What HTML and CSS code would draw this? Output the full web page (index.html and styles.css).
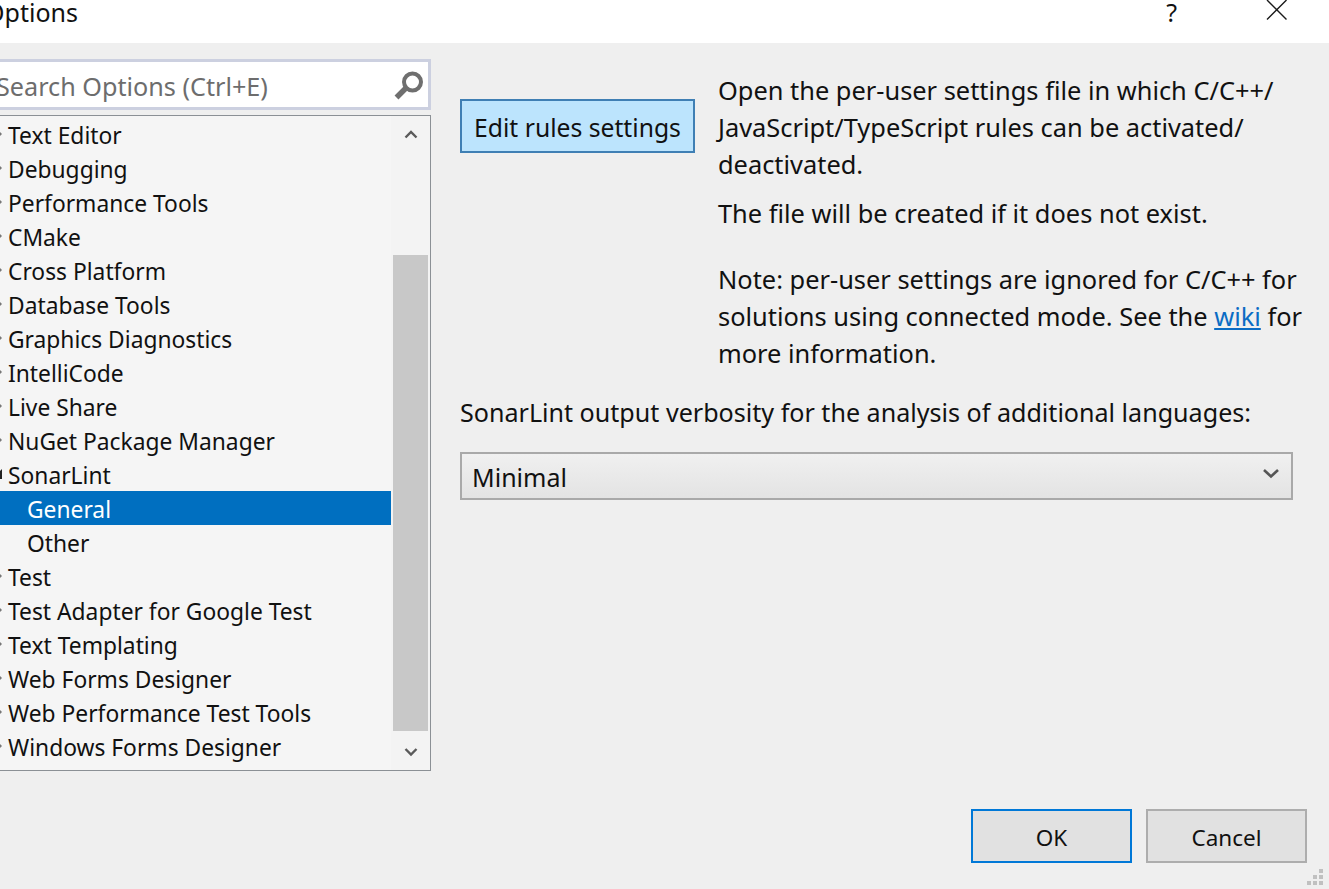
FILE: index.html
```html
<!DOCTYPE html>
<html>
<head>
  <title>Options</title>
  <link rel="stylesheet" href="styles.css">
</head>
<body>
  <div class="titlebar">
    <div class="window-title">Options</div>
    <div class="window-help">?</div>
    <svg class="window-close" width="22" height="22" viewBox="0 0 22 22">
      <path d="M1 0L20.5 19.5M20.5 0L1 19.5" stroke="#1a1a1a" stroke-width="1.4" fill="none"/>
    </svg>
  </div>

  <div class="content">
    <div class="sidebar">
      <div class="search">
        <span class="search-text">Search Options (Ctrl+E)</span>
        <svg class="search-icon" width="30" height="30" viewBox="0 0 30 30">
          <circle cx="18.5" cy="12" r="8.5" fill="none" stroke="#6f6f6f" stroke-width="4"/>
          <path d="M12 18L2.5 27.5" stroke="#6f6f6f" stroke-width="5.5" fill="none"/>
        </svg>
      </div>

      <div class="tree">
        <div class="tree-list">
          <div class="row"><i class="arrow"></i>Text Editor</div>
          <div class="row"><i class="arrow"></i>Debugging</div>
          <div class="row"><i class="arrow"></i>Performance Tools</div>
          <div class="row"><i class="arrow"></i>CMake</div>
          <div class="row"><i class="arrow"></i>Cross Platform</div>
          <div class="row"><i class="arrow"></i>Database Tools</div>
          <div class="row"><i class="arrow"></i>Graphics Diagnostics</div>
          <div class="row"><i class="arrow"></i>IntelliCode</div>
          <div class="row"><i class="arrow"></i>Live Share</div>
          <div class="row"><i class="arrow"></i>NuGet Package Manager</div>
          <div class="row"><i class="arrow open"></i>SonarLint</div>
          <div class="row child selected">General</div>
          <div class="row child">Other</div>
          <div class="row"><i class="arrow"></i>Test</div>
          <div class="row"><i class="arrow"></i>Test Adapter for Google Test</div>
          <div class="row"><i class="arrow"></i>Text Templating</div>
          <div class="row"><i class="arrow"></i>Web Forms Designer</div>
          <div class="row"><i class="arrow"></i>Web Performance Test Tools</div>
          <div class="row"><i class="arrow"></i>Windows Forms Designer</div>
        </div>
        <div class="scrollbar">
          <svg class="scroll-btn" width="38" height="34" viewBox="0 0 38 34">
            <path d="M14.5 21.5L20 16L25.5 21.5" stroke="#5a5a5a" stroke-width="2.4" fill="none"/>
          </svg>
          <div class="scroll-track"><div class="scroll-thumb"></div></div>
          <svg class="scroll-btn" width="38" height="34" viewBox="0 0 38 34">
            <path d="M14.5 13L20 18.5L25.5 13" stroke="#5a5a5a" stroke-width="2.4" fill="none"/>
          </svg>
        </div>
      </div>
    </div>

    <div class="main">
      <div class="rules">
        <button class="edit-btn"><span class="btn-label">Edit rules settings</span></button>
        <div class="rules-text">
          <p class="para">Open the per-user settings file in which C/C++/<br>JavaScript/TypeScript rules can be activated/<br>deactivated.</p>
          <p class="para para-second">The file will be created if it does not exist.</p>
          <p class="para para-note">Note: per-user settings are ignored for C/C++ for<br>solutions using connected mode. See the <a class="wiki" href="#">wiki</a> for<br>more information.</p>
        </div>
      </div>
      <div class="verbosity-label">SonarLint output verbosity for the analysis of additional languages:</div>
      <div class="select">
        <span class="select-value">Minimal</span>
        <svg class="select-arrow" width="16" height="12" viewBox="0 0 16 12">
          <path d="M1 2L8 8.5L15 2" stroke="#555" stroke-width="2.6" fill="none"/>
        </svg>
      </div>
    </div>
  </div>

  <div class="footer">
    <button class="dlg-btn default"><span class="btn-label">OK</span></button>
    <button class="dlg-btn"><span class="btn-label">Cancel</span></button>
  </div>

  <div class="grip">
    <i></i><i></i><i></i><i></i><i></i><i></i>
  </div>
</body>
</html>
```

FILE: styles.css
```css
html, body {
  margin: 0;
  padding: 0;
  height: 100%;
}

body {
  width: 1329px;
  height: 889px;
  overflow: hidden;
  position: relative;
  background-color: #efefef;
  color: #111;
  font-family: "Noto Sans", "Open Sans", sans-serif;
  font-size: 25px;
}

.titlebar {
  display: flex;
  align-items: flex-start;
  height: 43px;
  background-color: #fff;
}

.window-title {
  margin-left: -15px;
  line-height: 24px;
  flex: 1;
}

.window-help {
  line-height: 24px;
  margin-right: 89px;
}

.window-close {
  margin-right: 41px;
}

.content {
  display: flex;
  height: 728px;
}

.sidebar {
  width: 431px;
  margin-top: 16px;
  flex-shrink: 0;
}

.search {
  display: flex;
  align-items: center;
  justify-content: space-between;
  height: 45px;
  margin-left: -20px;
  padding-left: 13px;
  padding-right: 4px;
  background-color: #fff;
  border: 3px solid #ccd0e0;
  color: #6d6d6d;
  font-size: 25.2px;
}

.search-text {
  margin-top: 3px;
}

.search-icon {
  flex-shrink: 0;
}

.tree {
  display: flex;
  height: 654px;
  margin-top: 5px;
  margin-left: -20px;
  background-color: #f5f5f5;
  border: 1px solid #8b9095;
  font-size: 22.8px;
}

.tree-list {
  flex: 1;
  padding-top: 1px;
}

.row {
  display: flex;
  align-items: center;
  box-sizing: border-box;
  height: 34px;
  padding-top: 2px;
  padding-left: 27px;
  position: relative;
  white-space: nowrap;
}

.row.child {
  padding-left: 46px;
}

.row.selected {
  background-color: #006fc0;
  color: #fff;
}

.arrow {
  position: absolute;
  left: 18px;
  top: 14px;
  width: 0;
  height: 0;
  border-left: 3px solid #777;
  border-top: 3px solid transparent;
  border-bottom: 3px solid transparent;
}

.arrow.open {
  top: 12px;
  left: 11px;
  border: 5px solid transparent;
  border-right-color: #222;
  border-bottom-color: #222;
}

.scrollbar {
  display: flex;
  flex-direction: column;
  width: 39px;
  flex-shrink: 0;
  background-color: #f3f3f3;
}

.scroll-btn {
  flex-shrink: 0;
}

.scroll-track {
  flex: 1;
  padding-top: 105px;
  padding-bottom: 5px;
  display: flex;
  flex-direction: column;
}

.scroll-thumb {
  flex: 1;
  margin-left: 2px;
  width: 35px;
  background-color: #c8c8c8;
}

.main {
  flex: 1;
  min-width: 0;
  padding-left: 29px;
  padding-right: 36px;
}

.rules {
  display: flex;
  align-items: flex-start;
}

.edit-btn {
  width: 235px;
  height: 54px;
  margin-top: 56px;
  flex-shrink: 0;
  padding: 0;
  background-color: #bce4fd;
  border: 2px solid #3f7fb4;
  color: #111;
  font: inherit;
  font-size: 24.7px;
}

.btn-label {
  position: relative;
  top: 1px;
}

.rules-text {
  margin-left: 23px;
  margin-top: 29px;
  white-space: nowrap;
  font-size: 25.4px;
}

.para {
  margin: 0;
  line-height: 37px;
}

.para-second {
  margin-top: 12px;
}

.para-note {
  margin-top: 29px;
}

.wiki {
  color: #0a6cc4;
}

.verbosity-label {
  margin-top: 22px;
  line-height: 37px;
  font-size: 25.1px;
}

.select {
  display: flex;
  align-items: center;
  justify-content: space-between;
  height: 44px;
  margin-top: 21px;
  padding-left: 10px;
  padding-right: 12px;
  border: 2px solid #a9a9a9;
  background: linear-gradient(#f0f0f0, #e3e3e3);
}

.select-value {
  margin-top: 2px;
}

.select-arrow {
  margin-bottom: 5px;
}

.footer {
  display: flex;
  justify-content: flex-end;
  gap: 14px;
  padding-top: 38px;
  padding-right: 22px;
}

.dlg-btn {
  width: 161px;
  height: 54px;
  padding: 0;
  background-color: #e1e1e1;
  border: 2px solid #adadad;
  color: #111;
  font: inherit;
  font-size: 22.5px;
}

.dlg-btn.default {
  border-color: #0078d7;
}

.grip {
  position: absolute;
  right: 6px;
  bottom: 4px;
  display: grid;
  grid-template-columns: repeat(3, 4px);
  grid-template-rows: repeat(3, 4px);
  gap: 2px;
}

.grip i {
  background-color: #c0c0c0;
}

.grip i:nth-child(1) {
  grid-column: 3;
  grid-row: 1;
}

.grip i:nth-child(2) {
  grid-column: 2;
  grid-row: 2;
}

.grip i:nth-child(3) {
  grid-column: 3;
  grid-row: 2;
}

.grip i:nth-child(4) {
  grid-column: 1;
  grid-row: 3;
}

.grip i:nth-child(5) {
  grid-column: 2;
  grid-row: 3;
}

.grip i:nth-child(6) {
  grid-column: 3;
  grid-row: 3;
}
```
